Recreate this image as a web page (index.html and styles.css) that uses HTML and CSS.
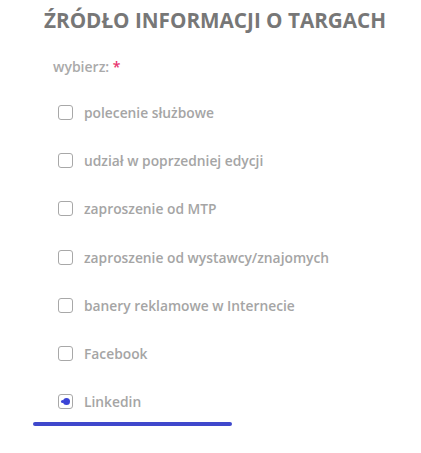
FILE: index.html
```html
<!DOCTYPE html>
<html lang="pl">
<head>
    <meta charset="UTF-8">
    <title>Źródło informacji o targach</title>
    <link rel="stylesheet" href="styles.css">
</head>
<body>
    <div class="container">
        <h2 class="title">ŹRÓDŁO INFORMACJI O TARGACH</h2>
        <div class="field-label">wybierz: <span class="required">*</span></div>
        <ul class="options">
            <li><span class="box"></span><span class="text">polecenie służbowe</span></li>
            <li><span class="box"></span><span class="text">udział w poprzedniej edycji</span></li>
            <li><span class="box"></span><span class="text">zaproszenie od MTP</span></li>
            <li><span class="box"></span><span class="text">zaproszenie od wystawcy/znajomych</span></li>
            <li><span class="box"></span><span class="text">banery reklamowe w Internecie</span></li>
            <li><span class="box"></span><span class="text">Facebook</span></li>
            <li class="checked"><span class="box"><span class="dot"></span></span><span class="text">Linkedin</span></li>
        </ul>
        <div class="underline"></div>
    </div>
</body>
</html>
```

FILE: styles.css
```css
body {
    margin: 0;
    font-family: "Open Sans", Arial, sans-serif;
    background: #fff;
}
.container {
    padding: 6px 0 0 33px;
}
.title {
    margin: 0 0 0 11px;
    font-size: 20.7px;
    line-height: 28px;
    font-weight: 700;
    color: #777;
}
.field-label {
    margin: 24px 0 0 20px;
    font-size: 14px;
    font-weight: 600;
    color: #aaa;
    line-height: 18px;
}
.required {
    color: #e8336f;
}
.options {
    list-style: none;
    margin: 12px 0 0 25px;
    padding: 0;
}
.options li {
    display: flex;
    align-items: center;
    height: 48.3px;
}
.box {
    width: 13px;
    height: 13px;
    border: 1px solid #a8a8a8;
    border-radius: 3px;
    display: flex;
    align-items: center;
    justify-content: center;
    box-sizing: content-box;
}
.dot {
    width: 7px;
    height: 7px;
    margin-left: 1px;
    border-radius: 50%;
    background: #3a44d6;
    box-shadow: -4px 0 0 -2px #3a44d6;
}
.text {
    margin-left: 11px;
    font-size: 13.8px;
    font-weight: 600;
    color: #a5a5a5;
}
.underline {
    width: 199px;
    height: 4px;
    margin-top: -4px;
    background: #3f48cc;
    border-radius: 2px;
}
```
